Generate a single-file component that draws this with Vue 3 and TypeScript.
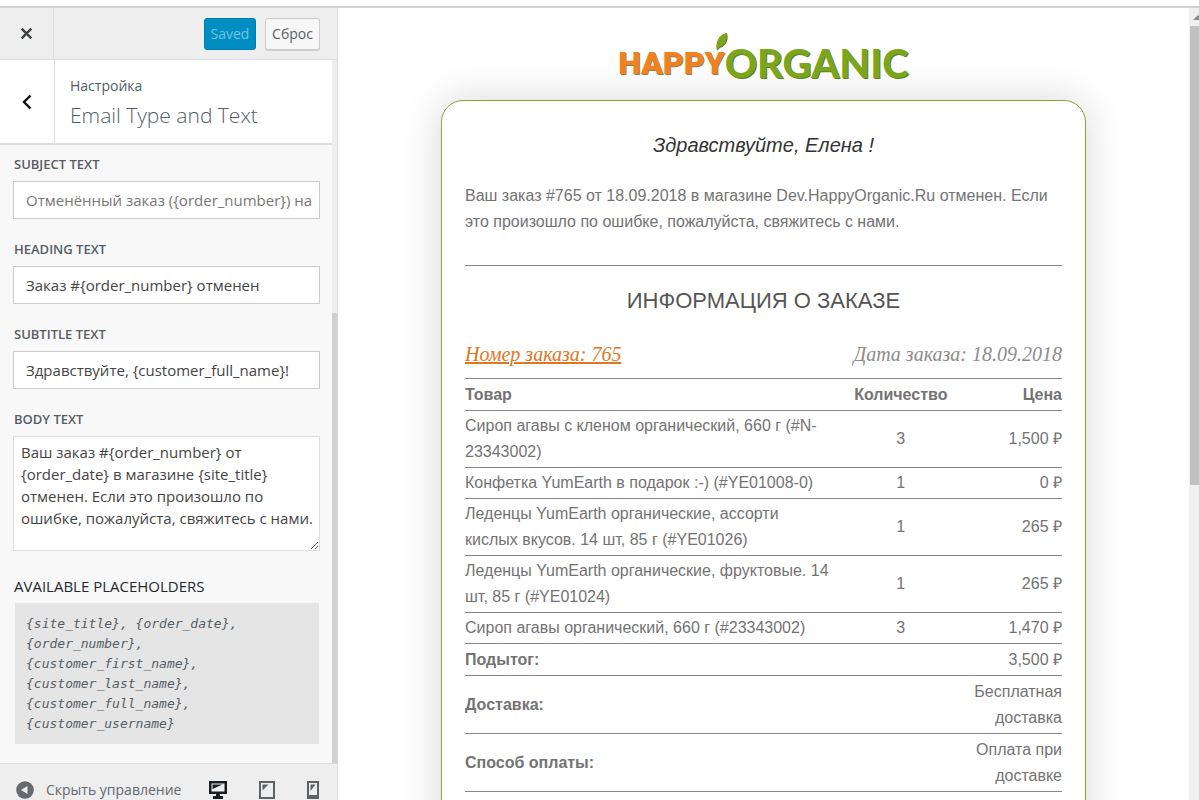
<script setup lang="ts">
import { ref } from 'vue'

interface OrderItem {
  name: string
  quantity: number
  price: string
}

interface OrderTotal {
  label: string
  value: string
}

const subject = ref('')
const heading = ref('Заказ #{order_number} отменен')
const subtitle = ref('Здравствуйте, {customer_full_name}!')
const body = ref(
  'Ваш заказ #{order_number} от {order_date} в магазине {site_title} отменен. Если это произошло по ошибке, пожалуйста, свяжитесь с нами.'
)

const placeholders: string[] = [
  '{site_title}',
  '{order_date}',
  '{order_number}',
  '{customer_first_name}',
  '{customer_last_name}',
  '{customer_full_name}',
  '{customer_username}'
]

const items: OrderItem[] = [
  { name: 'Сироп агавы с кленом органический, 660 г (#N-23343002)', quantity: 3, price: '1,500 ₽' },
  { name: 'Конфетка YumEarth в подарок :-) (#YE01008-0)', quantity: 1, price: '0 ₽' },
  { name: 'Леденцы YumEarth органические, ассорти кислых вкусов. 14 шт, 85 г (#YE01026)', quantity: 1, price: '265 ₽' },
  { name: 'Леденцы YumEarth органические, фруктовые. 14 шт, 85 г (#YE01024)', quantity: 1, price: '265 ₽' },
  { name: 'Сироп агавы органический, 660 г (#23343002)', quantity: 3, price: '1,470 ₽' }
]

const totals: OrderTotal[] = [
  { label: 'Подытог:', value: '3,500 ₽' },
  { label: 'Доставка:', value: 'Бесплатная доставка' },
  { label: 'Способ оплаты:', value: 'Оплата при доставке' },
  { label: 'Всего:', value: '3,500 ₽' }
]
</script>

<template>
  <div class="customizer">
    <div class="topline"></div>
    <div class="columns">
      <aside class="sidebar">
        <header class="actions">
          <button class="close" type="button" aria-label="Закрыть">
            <svg width="13" height="13" viewBox="0 0 12 12"><path d="M1.500 1.500 10.500 10.500M10.500 1.500 1.500 10.500" stroke="#3c4146" stroke-width="2.200" fill="none" /></svg>
          </button>
          <button class="btn saved" type="button">Saved</button>
          <button class="btn reset" type="button">Сброс</button>
        </header>

        <div class="scroller">
          <div class="panel">
            <div class="section-head">
              <button class="back" type="button" aria-label="Назад">
                <svg width="10" height="16" viewBox="0 0 10 16"><path d="M8.500 1.500 2 8 8.500 14.500" stroke="#111" stroke-width="2.400" fill="none" /></svg>
              </button>
              <div class="titles">
                <span class="crumb">Настройка</span>
                <h1>Email Type and Text</h1>
              </div>
            </div>

            <form class="fields" @submit.prevent>
              <div class="field">
                <label for="subject">SUBJECT TEXT</label>
                <input id="subject" v-model="subject" type="text" placeholder="Отменённый заказ ({order_number}) на" />
              </div>
              <div class="field">
                <label for="heading">HEADING TEXT</label>
                <input id="heading" v-model="heading" type="text" />
              </div>
              <div class="field">
                <label for="subtitle">SUBTITLE TEXT</label>
                <input id="subtitle" v-model="subtitle" type="text" />
              </div>
              <div class="field">
                <label for="body">BODY TEXT</label>
                <textarea id="body" v-model="body" spellcheck="false"></textarea>
              </div>
              <h2>AVAILABLE PLACEHOLDERS</h2>
              <code class="placeholders">{{ placeholders.join(', ') }}</code>
            </form>
          </div>
          <div class="panel-track"><div class="panel-thumb"></div></div>
        </div>

        <footer class="footer">
          <button class="collapse" type="button">
            <svg width="18" height="18" viewBox="0 0 18 18"><circle cx="9" cy="9" r="8.800" fill="#656a6f" /><path d="M5 9 11.500 5v8z" fill="#eee" /></svg>
            <span>Скрыть управление</span>
          </button>
          <div class="devices">
            <button type="button" aria-label="Компьютер">
              <svg width="18" height="18" viewBox="0 0 18 18"><path d="M0 0h18v13h-7v2h3v3H4v-3h3v-2H0z" fill="#191e23" /><path d="M2.500 2.500h13v8h-13z" fill="#eee" /><path d="M3.500 3.500h10L3.500 8z" fill="#191e23" /></svg>
            </button>
            <button type="button" aria-label="Планшет">
              <svg width="16" height="18" viewBox="0 0 16 18"><path d="M1 1h14v16H1z" fill="none" stroke="#5d6267" stroke-width="2" /><path d="M3.500 3.500h6l-6 6z" fill="#5d6267" /></svg>
            </button>
            <button type="button" aria-label="Телефон">
              <svg width="12" height="18" viewBox="0 0 12 18"><path d="M1 1h10v16H1z" fill="none" stroke="#5d6267" stroke-width="2" /><path d="M3.500 3.500h5L3.500 10zM1 14h10v3H1z" fill="#5d6267" /></svg>
            </button>
          </div>
        </footer>
      </aside>

      <main class="preview">
        <div class="mail">
          <div class="logo">
            <span class="happy">HAPPY</span>
            <span class="organic">ORGANIC</span>
            <svg class="leaf" width="12" height="18" viewBox="0 0 12 18"><path d="M1 17.500C-1 9 3 2 11 0c2 7-1 13-7 15z" fill="#5f7d2a" /><path d="M1 16C0 8 4 2 10.500 0c1 7-1 12-7 14z" fill="#7ba51a" /></svg>
          </div>
          <article class="card">
            <p class="greeting">Здравствуйте, Елена !</p>
            <p class="message">Ваш заказ #765 от 18.09.2018 в магазине Dev.HappyOrganic.Ru отменен. Если это произошло по ошибке, пожалуйста, свяжитесь с нами.</p>
            <hr />
            <h2 class="info">ИНФОРМАЦИЯ О ЗАКАЗЕ</h2>
            <div class="meta">
              <a href="#order">Номер заказа: 765</a>
              <span>Дата заказа: 18.09.2018</span>
            </div>
            <table>
              <colgroup>
                <col class="c-name" />
                <col class="c-qty" />
                <col class="c-price" />
              </colgroup>
              <thead>
                <tr>
                  <th scope="col">Товар</th>
                  <th scope="col" class="qty">Количество</th>
                  <th scope="col" class="price">Цена</th>
                </tr>
              </thead>
              <tbody>
                <tr v-for="item in items" :key="item.name">
                  <td>{{ item.name }}</td>
                  <td class="qty">{{ item.quantity }}</td>
                  <td class="price">{{ item.price }}</td>
                </tr>
              </tbody>
              <tfoot>
                <tr v-for="total in totals" :key="total.label">
                  <th scope="row" colspan="2">{{ total.label }}</th>
                  <td class="price">{{ total.value }}</td>
                </tr>
              </tfoot>
            </table>
          </article>
        </div>
        <div class="page-track">
          <svg width="10" height="18" viewBox="0 0 10 18"><path d="M4 12 9 7l1 1v4z" fill="#8a8a8a" /></svg>
          <div class="page-thumb"></div>
        </div>
      </main>
    </div>
  </div>
</template>

<style>
body {
  margin: 0;
  overflow: hidden;
}
</style>

<style scoped>
* {
  box-sizing: border-box;
}

.customizer {
  display: flex;
  flex-direction: column;
  height: 100vh;
  overflow: hidden;
  background: #fff;
  color: #555d66;
  font-family: "Open Sans", "Noto Sans", sans-serif;
}

button {
  display: flex;
  align-items: center;
  justify-content: center;
  padding: 0;
  border: 0;
  background: none;
  color: inherit;
  font: inherit;
}

svg {
  display: block;
  flex: none;
}

.topline {
  flex: none;
  height: 8px;
  border-bottom: 2px solid #d2d2d2;
}

.columns {
  display: flex;
  flex: 1;
  min-height: 0;
}

.sidebar {
  display: flex;
  flex: none;
  flex-direction: column;
  width: 338px;
  border-right: 1px solid #ddd;
  background: #f8f8f8;
}

.actions {
  display: flex;
  flex: none;
  align-items: center;
  height: 52px;
  padding-right: 17px;
  border-bottom: 1px solid #ddd;
  background: #eee;
}

.close {
  width: 54px;
  height: 100%;
  margin-right: auto;
  border-right: 1px solid #ddd;
}

.btn {
  height: 32px;
  border: 1px solid #ccc;
  border-radius: 3px;
  font-size: 14px;
}

.saved {
  width: 52px;
  margin-right: 9px;
  border-color: #007cb2;
  background: #008ec2;
  color: #70c4e4;
}

.reset {
  width: 55px;
  background: #f7f7f7;
  box-shadow: 0 1px 0 #ccc;
}

.scroller {
  display: flex;
  flex: 1;
  min-height: 0;
}

.panel {
  flex: 1;
  min-width: 0;
}

.section-head {
  display: flex;
  height: 85px;
  border-bottom: 2px solid #ddd;
  background: #fff;
}

.back {
  width: 55px;
  border-right: 1px solid #ddd;
}

.titles {
  padding: 15px 15px 0;
}

.crumb {
  display: block;
  font-size: 14px;
  line-height: 22px;
}

h1 {
  margin: 0;
  font-size: 21px;
  font-weight: 300;
  line-height: 36px;
}

.fields {
  padding: 10px 12px 0 13px;
}

.field {
  display: flex;
  flex-direction: column;
  gap: 8px;
  margin-bottom: 21px;
}

label {
  padding-left: 1px;
  font-size: 13px;
  font-weight: 600;
  line-height: 18px;
}

input,
textarea {
  display: block;
  width: 100%;
  margin: 0;
  border: 1px solid #ccc;
  background: #fff;
  color: #444;
  font-family: inherit;
  font-size: 15px;
}

input {
  height: 38px;
  padding: 0 4px 0 12px;
}

input::placeholder {
  color: #777;
  opacity: 1;
}

textarea {
  height: 115px;
  padding: 4px 0 4px 7px;
  border-color: #ddd;
  line-height: 22px;
  overflow: hidden;
  resize: vertical;
}

.fields h2 {
  margin: 24px 0 6px;
  padding-left: 1px;
  color: #23282d;
  font-size: 15px;
  font-weight: 500;
  line-height: 22px;
}

.placeholders {
  display: block;
  margin: 0 1px 0 2px;
  padding: 11px 40px 10px 11px;
  background: #e5e5e5;
  font-family: "DejaVu Sans Mono", monospace;
  font-size: 13px;
  font-style: italic;
  line-height: 20px;
}

.panel-track {
  display: flex;
  flex-direction: column;
  justify-content: flex-end;
  width: 5px;
  background: #eee;
}

.panel-thumb {
  height: 64%;
  background: #d0d0d0;
}

.footer {
  display: flex;
  flex: none;
  align-items: center;
  justify-content: space-between;
  height: 37px;
  padding: 15px 18px 0 16px;
  border-top: 1px solid #ddd;
  background: #eee;
}

.collapse {
  gap: 12px;
  color: #656a6f;
  font-size: 14px;
}

.devices {
  display: flex;
  gap: 32px;
}

.preview {
  display: flex;
  flex: 1;
  min-width: 0;
  overflow: hidden;
}

.mail {
  display: flex;
  flex: 1;
  flex-direction: column;
  align-items: center;
  min-width: 0;
}

.logo {
  display: flex;
  flex: none;
  position: relative;
  align-items: center;
  height: 92px;
  padding-top: 18px;
  line-height: 48px;
}

.happy {
  color: #f08020;
  font-family: Roboto, sans-serif;
  font-size: 32px;
  font-weight: 900;
  text-shadow: 1px 1px 0 #8a8345;
}

.organic {
  color: #7ba51a;
  font-family: Lato, sans-serif;
  font-size: 40px;
  font-weight: 900;
  text-shadow: 1px 1px 0 #5f7d2a;
}

.leaf {
  position: absolute;
  top: 25px;
  left: 98px;
}

.card {
  width: 76%;
  max-width: 645px;
  flex: none;
  padding: 30px 23px;
  border: 1px solid #8aa53a;
  border-radius: 22px;
  background: #fff;
  box-shadow: 0 0 40px rgba(0, 0, 0, 0.16);
  color: #737373;
  font-family: "Liberation Sans", Arial, sans-serif;
  font-size: 16px;
  line-height: 26px;
}

.greeting {
  margin: 0 0 24px;
  color: #333;
  font-size: 20px;
  font-style: italic;
  line-height: 28px;
  text-align: center;
}

.message {
  margin: 0;
}

hr {
  margin: 30px 0 20px;
  border: 0;
  border-top: 1px solid #888;
}

.info {
  margin: 0 0 24px;
  color: #555;
  font-size: 22px;
  font-weight: 400;
  line-height: 30px;
  text-align: center;
}

.meta {
  display: flex;
  justify-content: space-between;
  margin-bottom: 10px;
  color: #8c8c8c;
  font-family: Georgia, "Liberation Serif", serif;
  font-size: 20px;
  font-style: italic;
  line-height: 28px;
}

.meta a {
  color: #dd7722;
}

table {
  width: 100%;
  border-collapse: collapse;
  border-top: 1px solid #888;
  table-layout: fixed;
}

.c-name {
  width: 62%;
}

.c-qty {
  width: 22%;
}

.c-price {
  width: 16%;
}

th,
td {
  padding: 2px 0;
  border-bottom: 1px solid #888;
  text-align: left;
  vertical-align: middle;
}

thead th,
tfoot th,
tfoot td {
  padding-top: 3px;
}

.qty {
  text-align: center;
}

.price {
  text-align: right;
}

.page-track {
  display: flex;
  flex: none;
  flex-direction: column;
  width: 10px;
  background: #f0f0f0;
}

.page-thumb {
  height: 58%;
  margin-left: 1px;
  background: #c1c1c1;
}
</style>
